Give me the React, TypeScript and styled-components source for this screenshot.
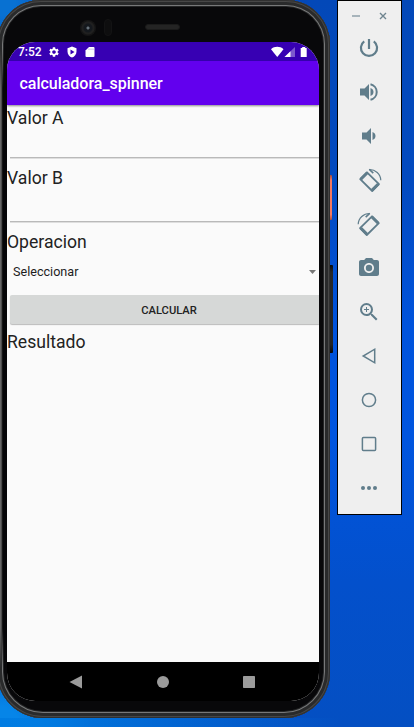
import React from "react";
import styled, { createGlobalStyle } from "styled-components";
import { MdSettings, MdCameraAlt, MdZoomIn } from "react-icons/md";

const GlobalStyle = createGlobalStyle`
  * { box-sizing: border-box; }
  body { margin: 0; overflow: hidden; font-family: Roboto, sans-serif; }
`;

const Desktop = styled.div`
  display: flex;
  align-items: flex-start;
  width: 414px;
  height: 727px;
  overflow: hidden;
  background:
    linear-gradient(90deg, #007ce2 0%, rgba(0, 98, 214, 0) 100%) 0 718px / 340px 9px no-repeat,
    radial-gradient(circle at 0 100%, #0685e8 0 20px, rgba(6, 133, 232, 0) 90px),
    radial-gradient(circle at 0 0, #0871d2 0 15px, rgba(8, 113, 210, 0) 70px),
    linear-gradient(180deg, #0348b8 0%, #034abf 25%, #0053dc 45%, #0055df 60%, #0350cc 80%, #044fc2 100%);
`;

const Phone = styled.main`
  position: relative;
  flex: none;
  width: 333px;
  height: 718px;
  margin-left: -3px;
  padding: 42px 11px 17px 10px;
  border-radius: 44px 44px 46px 46px;
  background: #08080a;
  box-shadow:
    inset 0 0 0 1px #303030,
    inset 0 0 0 2px #474747,
    inset 0 0 0 5px #292a2b,
    inset 0 0 0 6px #777879,
    inset 0 0 0 7px #242526;
`;

const LeftRim = styled.span`
  position: absolute;
  left: 3px;
  top: 48px;
  width: 7px;
  height: 620px;
  background: linear-gradient(90deg, #666 0 1px, #4b4b4b 1px 2px, #151515 2px 3px, #050507 3px);
  mask-image: linear-gradient(transparent, #000 40px, #000 580px, transparent);
`;

const SideKey = styled.span<{ $top: number; $height: number; $power?: boolean }>`
  position: absolute;
  left: 333px;
  top: ${(p) => p.$top}px;
  width: ${(p) => (p.$power ? 2 : 3)}px;
  height: ${(p) => p.$height}px;
  border-radius: 0 1px 1px 0;
  background: ${(p) => (p.$power ? "linear-gradient(#a54a3b, #f47860 12%, #f47860 88%, #ad4a38)" : "linear-gradient(#080808, #282828 8%, #242424 90%, #080808)")};
`;

const Camera = styled.span`
  position: absolute;
  left: 83px;
  top: 20px;
  width: 16px;
  height: 16px;
  border-radius: 50%;
  background: radial-gradient(circle, #66717a 0 1px, #14181d 2px 4px, #202020 5px 6px, #141414 7px);
`;

const Sensor = styled.span`
  position: absolute;
  left: 107px;
  top: 19px;
  width: 8px;
  height: 17px;
  border-radius: 4px;
  background: #0e0e0f;
  border: 1px solid #131314;
`;

const Speaker = styled.span`
  position: absolute;
  left: 148px;
  top: 24px;
  width: 35px;
  height: 6px;
  border-radius: 3px;
  background: #242424;
  border: 1px solid #1a1a1a;
`;

const Screen = styled.div`
  display: flex;
  flex-direction: column;
  width: 312px;
  height: 659px;
  overflow: hidden;
  border-radius: 28px;
  background: #fafafa;
  color: #222;
`;

const StatusBar = styled.div`
  display: flex;
  align-items: center;
  flex: none;
  height: 19px;
  padding: 0 11.6px 0 11px;
  background: #3700b3;
  color: #fff;
  svg { display: block; }
`;

const Clock = styled.time`
  width: 30px;
  padding-top: 1px;
  font-size: 12px;
  font-weight: 500;
  line-height: 19px;
`;

const Notifications = styled.div`
  display: flex;
  align-items: center;
  gap: 6px;
`;

const Signals = styled.div`
  display: flex;
  align-items: center;
  margin-left: auto;
`;

const AppBar = styled.header`
  position: relative;
  flex: none;
  height: 44px;
  padding-left: 12.5px;
  background: #6200ee;
  color: #fff;
  box-shadow: 0 1px 2px rgba(0, 0, 0, 0.45);
`;

const Title = styled.h1`
  margin: 0;
  font-size: 16px;
  font-weight: 500;
  line-height: 46px;
  letter-spacing: -0.02px;
`;

const Form = styled.form`
  display: flex;
  flex-direction: column;
  flex: 1;
`;

const Label = styled.label`
  height: 24px;
  font-size: 17.6px;
  line-height: 26px;
  white-space: nowrap;
`;

const Input = styled.input<{ $height: number; $gap: number }>`
  width: 309px;
  height: ${(p) => p.$height}px;
  margin: 0 0 ${(p) => p.$gap}px 3px;
  padding: 0;
  border: 0;
  border-bottom: 1px solid #b9b9b9;
  outline: 0;
  background: transparent;
  box-shadow: 0 1px #dedede;
`;

const Spinner = styled.div`
  display: flex;
  align-items: center;
  justify-content: space-between;
  height: 37px;
  margin-bottom: 5px;
  padding: 0 3px 0 6px;
  font-size: 12.6px;
  color: #1d1d1d;
`;

const Button = styled.button`
  height: 29px;
  margin: 0 0 5px 3px;
  padding: 1px 0 0 9px;
  border: 0;
  border-radius: 2px 0 0 2px;
  background: #d6d8d7;
  box-shadow: 0 1px 1px #bbb;
  font: 500 11.2px Roboto, sans-serif;
  line-height: 29px;
  color: #222;
`;

const Navigation = styled.nav`
  display: flex;
  align-items: center;
  justify-content: space-between;
  flex: none;
  height: 39px;
  padding: 0 64px 0 62px;
  background: #000;
`;

const Toolbar = styled.aside`
  flex: none;
  width: 65px;
  height: 515px;
  margin-left: 7px;
  border: 1px solid #000;
  background: #efefef;
  color: #607d8b;
`;

const WindowControls = styled.div`
  display: flex;
  align-items: center;
  height: 25px;
  padding: 4px 14px 0;
  justify-content: space-between;
`;

const ToolList = styled.div`
  display: grid;
  grid-auto-rows: 44px;
`;

const ToolButton = styled.button`
  display: grid;
  place-items: center;
  width: 62px;
  padding: 0;
  border: 0;
  background: transparent;
  color: inherit;
`;

const ShieldIcon = () => (
  <svg width="12" height="12" viewBox="0 0 24 24" fill="currentColor">
    <path fillRule="evenodd" d="M12 1 3 4.5V11c0 5.8 3.8 10.8 9 12 5.2-1.2 9-6.2 9-12V4.5zM9 7l8 5-8 5z" />
  </svg>
);

const CardIcon = () => (
  <svg width="12" height="12" viewBox="0 0 24 24" fill="currentColor">
    <path d="M10 2h9a2 2 0 0 1 2 2v16a2 2 0 0 1-2 2H5a2 2 0 0 1-2-2V9z" />
    <path d="M10 5v3m4-3v3m4-3v3" stroke="#9f86d9" strokeWidth="1.3" />
  </svg>
);

const SignalIcons = () => (
  <svg width="36" height="12" viewBox="0 0 36 12" fill="currentColor">
    <path d="M0 3.2C3.5 0 9 0 12.5 3.2L6.25 11z" />
    <path d="M24 1v10H13.5z" opacity=".35" />
    <path d="M19.5 5.3V11h-6z" />
    <path d="M31.2 1h3v1h1.5v9h-6V2h1.5z" />
  </svg>
);

const Minimize = () => <svg width="8" height="8"><path d="M0 4h8" stroke="#8fa1aa" strokeWidth="1.5" /></svg>;
const Close = () => <svg width="8" height="8"><path d="m1 1 6 6m0-6-6 6" stroke="#6f858f" strokeWidth="1.4" /></svg>;

const Power = () => (
  <svg width="22" height="22" viewBox="0 0 22 22" fill="none" stroke="currentColor" strokeWidth="2.2">
    <path d="M11 2v10M6.2 4.3a8.1 8.1 0 1 0 9.6 0" />
  </svg>
);

const Volume = ({ loud = false }: { loud?: boolean }) => (
  <svg width="22" height="22" viewBox="0 0 22 22" fill="currentColor">
    {loud ? (
      <>
        <path d="M2 7.5h4.5L11 3v16l-4.5-4.5H2zM12.5 7c4 1.2 4 6.8 0 8z" />
        <path d="M12.5 3.2a8 8 0 0 1 0 15.6" fill="none" stroke="currentColor" strokeWidth="2" />
      </>
    ) : <path d="M4 7.5h4.5L13 3v16l-4.5-4.5H4zM14.5 7c4 1.2 4 6.8 0 8z" />}
  </svg>
);

const Rotate = ({ right = false }: { right?: boolean }) => (
  <svg width="25" height="25" viewBox="0 0 25 25" fill="none" stroke="currentColor">
    <g transform={right ? "translate(25 0) scale(-1 1)" : undefined}>
      <path d="M10 4.3 22 16.2 15.2 23 3.2 11.2z" strokeWidth="1.8" strokeLinejoin="round" />
      <path d="M10.3 4.8 3.8 11.3M21.2 16l-6.3 6.3" strokeWidth="3" />
      <path d="M12 1.5c6.4-.3 11.6 4.6 11.8 10.8" strokeWidth="1.2" />
      <path d="m12.3 1.4 4 3.8" strokeWidth="1.6" />
    </g>
  </svg>
);

const BackOutline = () => <svg width="18" height="18"><path d="M14.7 2.2v13.6L3.2 9z" fill="none" stroke="currentColor" strokeWidth="1.5" /></svg>;
const CircleOutline = () => <svg width="18" height="18"><circle cx="9" cy="9" r="6.6" fill="none" stroke="currentColor" strokeWidth="1.5" /></svg>;
const SquareOutline = () => <svg width="18" height="18"><rect x="2.4" y="2.4" width="13.2" height="13.2" rx="1" fill="none" stroke="currentColor" strokeWidth="1.5" /></svg>;
const Dots = () => <svg width="18" height="18" fill="currentColor"><circle cx="3" cy="9" r="2" /><circle cx="9" cy="9" r="2" /><circle cx="15" cy="9" r="2" /></svg>;

const tools = [
  { label: "Power", icon: <Power /> },
  { label: "Volume up", icon: <Volume loud /> },
  { label: "Volume down", icon: <Volume /> },
  { label: "Rotate left", icon: <Rotate /> },
  { label: "Rotate right", icon: <Rotate right /> },
  { label: "Camera", icon: <MdCameraAlt size={24} /> },
  { label: "Zoom", icon: <MdZoomIn size={24} /> },
  { label: "Back", icon: <BackOutline /> },
  { label: "Home", icon: <CircleOutline /> },
  { label: "Overview", icon: <SquareOutline /> },
  { label: "More", icon: <Dots /> },
];

export default function App() {
  return (
    <>
      <GlobalStyle />
      <Desktop>
        <Phone>
          <LeftRim />
          <Camera />
          <Sensor />
          <Speaker />
          <SideKey $top={175} $height={45} $power />
          <SideKey $top={265} $height={88} />
          <Screen>
            <StatusBar>
              <Clock>7:52</Clock>
              <Notifications>
                <MdSettings size={12} />
                <ShieldIcon />
                <CardIcon />
              </Notifications>
              <Signals><SignalIcons /></Signals>
            </StatusBar>
            <AppBar><Title>calculadora_spinner</Title></AppBar>
            <Form onSubmit={(e) => e.preventDefault()}>
              <Label htmlFor="a">Valor A</Label>
              <Input id="a" $height={29} $gap={7} />
              <Label htmlFor="b">Valor B</Label>
              <Input id="b" $height={33} $gap={7} />
              <Label>Operacion</Label>
              <Spinner>
                Seleccionar
                <svg width="7" height="4"><path d="M0 0h7L3.5 4z" fill="#777" /></svg>
              </Spinner>
              <Button type="button">CALCULAR</Button>
              <Label>Resultado</Label>
            </Form>
            <Navigation>
              <svg width="13" height="14"><path d="M13 .5v13L.5 7z" fill="#9b9b9b" /></svg>
              <svg width="12" height="12"><circle cx="6" cy="6" r="6" fill="#9b9b9b" /></svg>
              <svg width="12" height="12"><rect width="12" height="12" rx=".7" fill="#9b9b9b" /></svg>
            </Navigation>
          </Screen>
        </Phone>
        <Toolbar>
          <WindowControls><Minimize /><Close /></WindowControls>
          <ToolList>
            {tools.map(({ label, icon }) => <ToolButton key={label} aria-label={label}>{icon}</ToolButton>)}
          </ToolList>
        </Toolbar>
      </Desktop>
    </>
  );
}
